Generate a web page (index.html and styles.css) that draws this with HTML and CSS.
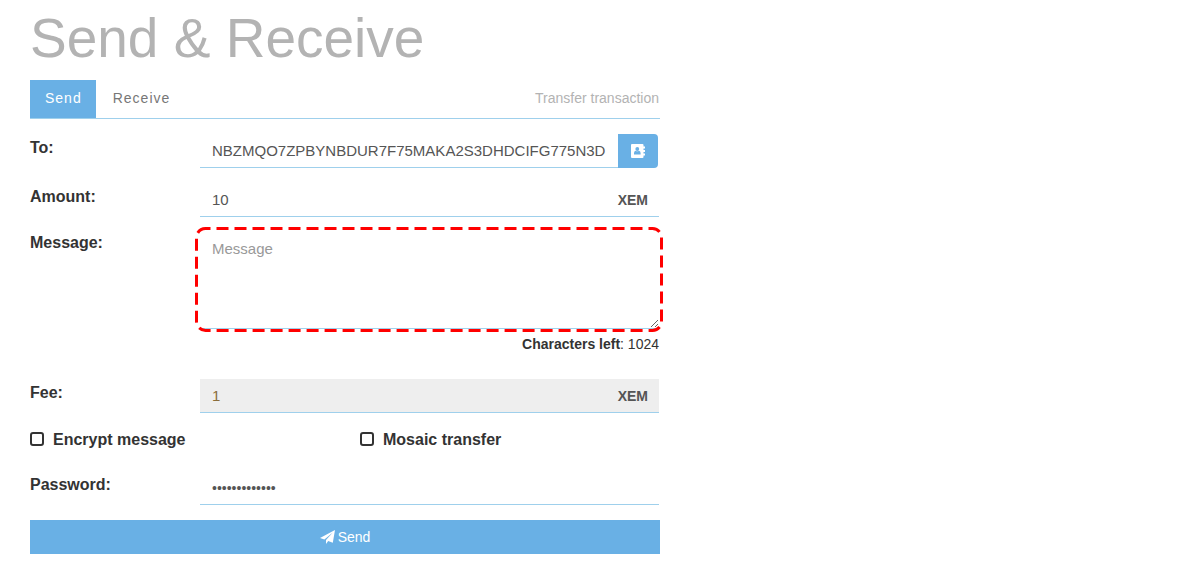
FILE: index.html
```html
<!DOCTYPE html>
<html lang="en">
<head>
<meta charset="utf-8">
<meta name="viewport" content="width=device-width, initial-scale=1">
<title>Send &amp; Receive</title>
<link rel="stylesheet" href="styles.css">
</head>
<body>
<main class="page">
  <h1 class="title">Send &amp; Receive</h1>
  <nav class="tabs">
    <a class="tab tab-active" href="#send">Send</a>
    <a class="tab" href="#receive">Receive</a>
    <span class="tabs-note">Transfer transaction</span>
  </nav>
  <form class="form" id="send">
    <div class="row">
      <label class="label" for="to">To:</label>
      <div class="field field-to">
        <div class="box"><input class="input" id="to" type="text" value="NBZMQO7ZPBYNBDUR7F75MAKA2S3DHDCIFG775N3D"></div>
        <button class="book" type="button" aria-label="Address book">
          <svg width="14" height="14" viewBox="0 0 14 14" aria-hidden="true">
            <path fill="#fff" d="M1 0h10.500q1 0 1 1v1.500H14v2h-1.500V6H14v2h-1.500v1.500H14v2h-1.500V13q0 1-1 1H1q-1 0-1-1V1q0-1 1-1z"/>
            <circle cx="6.300" cy="5" r="1.900" fill="#69b0e5"/>
            <path fill="#69b0e5" d="M3 10.500V9q0-2 1.700-2.200 1.600 1 3.200 0Q9.600 7 9.600 9v1.500z"/>
          </svg>
        </button>
      </div>
    </div>
    <div class="row">
      <label class="label" for="amount">Amount:</label>
      <div class="box">
        <input class="input" id="amount" type="text" value="10">
        <span class="unit">XEM</span>
      </div>
    </div>
    <div class="row row-message">
      <label class="label label-message" for="message">Message:</label>
      <div>
        <div class="message">
          <textarea class="textarea" id="message" placeholder="Message"></textarea>
          <svg class="highlight" aria-hidden="true"><rect class="highlight-line" x="1.5" y="1.5" rx="9"/></svg>
        </div>
        <p class="counter"><b>Characters left</b>: 1024</p>
      </div>
    </div>
    <div class="row">
      <label class="label" for="fee">Fee:</label>
      <div class="box box-disabled">
        <input class="input input-fee" id="fee" type="text" value="1" readonly>
        <span class="unit">XEM</span>
      </div>
    </div>
    <div class="checks">
      <label class="check"><input class="checkbox" type="checkbox">Encrypt message</label>
      <label class="check"><input class="checkbox" type="checkbox">Mosaic transfer</label>
    </div>
    <div class="row">
      <label class="label" for="password">Password:</label>
      <div class="box"><input class="input input-password" id="password" type="password" value="correcthorse1"></div>
    </div>
    <button class="submit" type="submit">
      <svg width="15" height="14" viewBox="0 0 15 14" aria-hidden="true">
        <path fill="#fff" d="M15 0l-2.200 12.800-4.600-1.900L6 14V10L12.800 2.600 4.400 9.400 0 8z"/>
      </svg>
      Send
    </button>
  </form>
</main>
</body>
</html>
```
FILE: styles.css
```css
* {
  box-sizing: border-box;
}

body {
  margin: 0;
  background: #fff;
  color: #333;
  font-family: "Liberation Sans", Arial, sans-serif;
  font-size: 14px;
  line-height: 20px;
}

.page {
  max-width: 690px;
  padding: 8px 30px 15px;
}

.title {
  margin: 0 0 12px;
  color: #b3b3b3;
  font-size: 55px;
  font-weight: 400;
  line-height: 60px;
}

.tabs {
  display: flex;
  align-items: stretch;
  border-bottom: 1px solid #9fd0ec;
}

.tab {
  padding: 8px 15px 10px;
  margin-right: 2px;
  color: #777;
  letter-spacing: 1px;
  text-decoration: none;
}

.tab-active {
  padding-right: 14px;
  background: #69b0e5;
  color: #fff;
}

.tabs-note {
  margin-left: auto;
  padding: 8px 1px 10px;
  color: #b3b3b3;
}

.form {
  display: grid;
  gap: 15px;
  padding-top: 15px;
}

.row {
  display: grid;
  grid-template-columns: 170px 1fr;
  align-items: start;
  padding-right: 1px;
}

.label,
.check {
  font-size: 16px;
  font-weight: 700;
}

.label {
  padding-top: 4px;
}

.label-message {
  padding-top: 1px;
}

.field-to {
  display: grid;
  grid-template-columns: 1fr 40px;
  padding-right: 1px;
}

.box {
  display: flex;
  align-items: center;
  min-width: 0;
  height: 34px;
  border-bottom: 1px solid #9fd0ec;
}

.box-disabled {
  background: #eee;
}

.input,
.textarea {
  border: 0;
  outline: 0;
  background: transparent;
  color: #555;
  font: 15px/20px "Liberation Sans", Arial, sans-serif;
}

.input {
  flex: 1;
  min-width: 0;
  padding: 6px 12px;
}

.input-fee {
  color: #8a6d3b;
}

.input-password {
  font-size: 14px;
}

.unit {
  padding-right: 11px;
  color: #555;
  font-weight: 700;
}

.book,
.submit {
  display: flex;
  align-items: center;
  justify-content: center;
  height: 34px;
  padding: 0;
  border: 0;
  background: #69b0e5;
  color: #fff;
  cursor: pointer;
}

.book {
  border-radius: 0 4px 4px 0;
}

.message {
  position: relative;
}

.textarea {
  display: block;
  width: 100%;
  height: 97px;
  padding: 7px 12px;
  border-bottom: 1px solid #9fd0ec;
  resize: vertical;
}

.textarea::placeholder {
  color: #999;
}

.highlight {
  position: absolute;
  top: -5px;
  left: -5px;
  width: calc(100% + 9px);
  height: calc(100% + 8px);
  pointer-events: none;
}

.highlight-line {
  width: calc(100% - 3px);
  height: calc(100% - 3px);
  fill: none;
  stroke: #f00;
  stroke-width: 3px;
  stroke-dasharray: 12 6;
  stroke-dashoffset: 7px;
}

.counter {
  margin: 5px 0 0;
  padding-bottom: 10px;
  text-align: right;
}

.checks {
  display: grid;
  grid-template-columns: 1fr 1fr;
  column-gap: 30px;
  padding: 2px 0 6px;
}

.check {
  display: flex;
  align-items: center;
  gap: 9px;
}

.checkbox {
  appearance: none;
  width: 14px;
  height: 14px;
  margin: 0 0 2px;
  border: 2px solid #333;
  border-radius: 3px;
  background: #fff;
}

.checkbox:checked {
  background: #69b0e5;
}

.submit {
  gap: 3px;
  font: 14px/20px "Liberation Sans", Arial, sans-serif;
}
```
